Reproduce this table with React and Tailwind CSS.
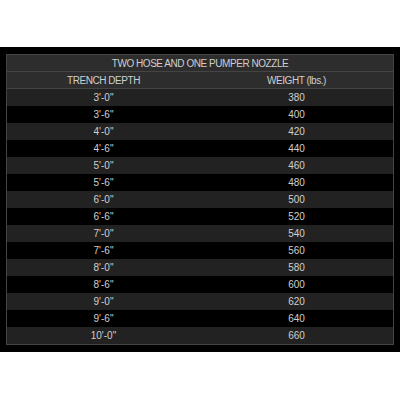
export default function App() {
  const rows = [
    ["3'-0\"", "380"],
    ["3'-6\"", "400"],
    ["4'-0\"", "420"],
    ["4'-6\"", "440"],
    ["5'-0\"", "460"],
    ["5'-6\"", "480"],
    ["6'-0\"", "500"],
    ["6'-6\"", "520"],
    ["7'-0\"", "540"],
    ["7'-6\"", "560"],
    ["8'-0\"", "580"],
    ["8'-6\"", "600"],
    ["9'-0\"", "620"],
    ["9'-6\"", "640"],
    ["10'-0\"", "660"],
  ];
  return (
    <div className="w-[400px] h-[400px] bg-white pt-[47px]" style={{ fontFamily: '"Liberation Sans", Arial, sans-serif' }}>
      <div className="h-[305px] bg-black px-[6px] pt-[7px]">
        <div className="border border-[#444] text-[10px] text-[#cfcfcf]">
          <div className="h-[17px] bg-[#2d2d2d] border-b border-[#444] flex items-center justify-center tracking-[-0.45px]">
            TWO HOSE AND ONE PUMPER NOZZLE
          </div>
          <div className="h-[17px] bg-[#2d2d2d] border-b border-[#444] grid grid-cols-2 items-center text-center tracking-[-0.45px]">
            <div>TRENCH DEPTH</div>
            <div>WEIGHT (lbs.)</div>
          </div>
          {rows.map(([a, b], i) => (
            <div
              key={i}
              className={`h-[17px] grid grid-cols-2 items-center text-center ${i % 2 === 0 ? "bg-[#222222]" : "bg-black"}`}
            >
              <div>{a}</div>
              <div>{b}</div>
            </div>
          ))}
        </div>
      </div>
    </div>
  );
}
